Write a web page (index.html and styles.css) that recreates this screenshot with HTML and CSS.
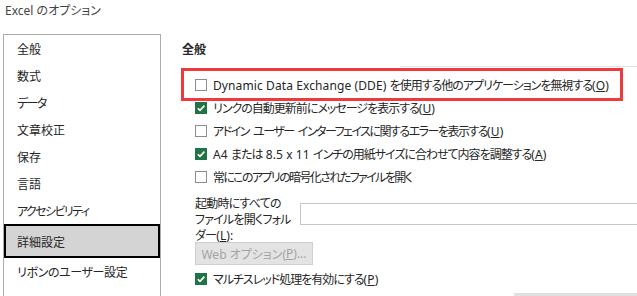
FILE: index.html
```html
<!DOCTYPE html>
<html lang="ja">
<head>
<meta charset="utf-8">
<title>Excel のオプション</title>
<link rel="stylesheet" href="styles.css">
</head>
<body>
<div class="title">Excel のオプション</div>
<div class="main">
  <nav class="sidebar">
    <div class="item">全般</div>
    <div class="item">数式</div>
    <div class="item kana">データ</div>
    <div class="item">文章校正</div>
    <div class="item">保存</div>
    <div class="item">言語</div>
    <div class="item kana">アクセシビリティ</div>
    <div class="item selected">詳細設定</div>
    <div class="item kana-mix">リボンのユーザー設定</div>
  </nav>
  <section class="content">
    <div class="heading">全般</div>
    <div class="rule"></div>
    <div class="row highlighted">
      <span class="box"></span>
      <span class="label"><span class="en">Dynamic Data Exchange (DDE) </span>を使用する他のアプリケーションを無視する<span class="mn">(<u>O</u>)</span></span>
      <span class="annot"></span>
    </div>
    <div class="row">
      <span class="box checked"><svg viewBox="0 0 12 12" width="12" height="12"><polyline points="2.8,6.2 5,8.4 9.4,3.6" fill="none" stroke="#fff" stroke-width="1.6"/></svg></span>
      <span class="label">リンクの自動更新前にメッセージを表示する<span class="mn">(<u>U</u>)</span></span>
    </div>
    <div class="row">
      <span class="box"></span>
      <span class="label tight">アドイン<span class="sp"> </span>ユーザー<span class="sp"> </span>インターフェイスに関するエラーを表示する<span class="mn">(<u>U</u>)</span></span>
    </div>
    <div class="row">
      <span class="box checked"><svg viewBox="0 0 12 12" width="12" height="12"><polyline points="2.8,6.2 5,8.4 9.4,3.6" fill="none" stroke="#fff" stroke-width="1.6"/></svg></span>
      <span class="label"><span class="en">A4 </span>または<span class="en"> 8.5 x 11 </span>インチの用紙サイズに合わせて内容を調整する<span class="mn">(<u>A</u>)</span></span>
    </div>
    <div class="row">
      <span class="box"></span>
      <span class="label tighter">常にこのアプリの暗号化されたファイルを開く</span>
    </div>
    <div class="folder">
      <div class="folder-label">起動時にすべての<br>ファイルを開くフォル<br>ダー<span class="mn">(<u>L</u>):</span></div>
      <div class="folder-input"></div>
    </div>
    <div class="webbtn">Web オプション(<u>P</u>)...</div>
    <div class="row last">
      <span class="box checked"><svg viewBox="0 0 12 12" width="12" height="12"><polyline points="2.8,6.2 5,8.4 9.4,3.6" fill="none" stroke="#fff" stroke-width="1.6"/></svg></span>
      <span class="label">マルチスレッド処理を有効にする<span class="mn">(<u>P</u>)</span></span>
    </div>
    <div class="peek"></div>
  </section>
</div>
</body>
</html>
```
FILE: styles.css
```css
html, body {
  margin: 0;
  padding: 0;
  background: #ffffff;
}
body {
  width: 637px;
  height: 296px;
  overflow: hidden;
  font-family: "Noto Sans", "Noto Sans CJK JP", sans-serif;
  font-feature-settings: "palt";
  font-size: 12px;
  color: #262626;
}
.title {
  height: 34px;
  box-sizing: border-box;
  padding: 2px 0 0 5px;
  line-height: 18px;
  color: #444444;
}
.main {
  display: flex;
  height: 262px;
  overflow: hidden;
}
.sidebar {
  width: 158px;
  margin-left: 3px;
  box-sizing: border-box;
  border: 1px solid #ababab;
  border-bottom: none;
  display: flex;
  flex-direction: column;
  flex: none;
}
.item {
  height: 27px;
  display: flex;
  align-items: center;
  padding-left: 13px;
  flex: none;
}
.item.kana {
  letter-spacing: -1.6px;
}
.item.kana-mix {
  letter-spacing: -0.4px;
}
.item.selected {
  height: 34px;
  box-sizing: border-box;
  border: 2px solid #000000;
  background: #d4d4d4;
  padding-left: 11px;
  padding-top: 1px;
}
.content {
  flex: 1;
  margin-left: 20px;
  min-width: 0;
}
.heading {
  margin-top: 6px;
  height: 20px;
  line-height: 20px;
  font-weight: 600;
  padding-left: 1px;
}
.rule {
  margin-top: 6px;
  margin-left: 219px;
  height: 1px;
  background: #e2e2e2;
  margin-bottom: 6.5px;
}
.row {
  position: relative;
  height: 23px;
  display: flex;
  align-items: center;
  padding-left: 14px;
  white-space: nowrap;
}
.label {
  letter-spacing: -1px;
}
.label.tight {
  letter-spacing: -1.5px;
}
.label.tighter {
  letter-spacing: -1.6px;
}
.label .en,
.label .mn,
.folder-label .mn {
  letter-spacing: 0.1px;
}
.label .sp {
  letter-spacing: 1px;
}
.box {
  width: 12px;
  height: 12px;
  box-sizing: border-box;
  border: 1px solid #8c8c8c;
  background: #fff;
  flex: none;
  margin-right: 6px;
  display: flex;
}
.box.checked {
  border: none;
  background: #217346;
}
.annot {
  position: absolute;
  left: 0;
  top: -5.5px;
  width: 442px;
  height: 33px;
  box-sizing: border-box;
  border: 3px solid #f0393d;
}
.folder {
  display: flex;
  margin-top: 7.5px;
  padding-left: 14px;
  height: 48px;
}
.folder-label {
  width: 105px;
  line-height: 16px;
  letter-spacing: -0.8px;
  flex: none;
}
.folder-input {
  margin-top: 7px;
  width: 360px;
  height: 22px;
  box-sizing: border-box;
  border: 1px solid #c6c6c6;
  flex: none;
}
.webbtn {
  margin-top: -2px;
  margin-left: 14px;
  width: 118px;
  height: 23px;
  box-sizing: border-box;
  border: 1px solid #cfcfcf;
  background: #e3e3e3;
  color: #a3a3a3;
  display: flex;
  align-items: center;
  justify-content: center;
}
.row.last {
  margin-top: 2.5px;
}
.peek {
  margin-top: 2.5px;
  margin-left: 333px;
  width: 140px;
  height: 3px;
  background: #e1e1e1;
}
```
